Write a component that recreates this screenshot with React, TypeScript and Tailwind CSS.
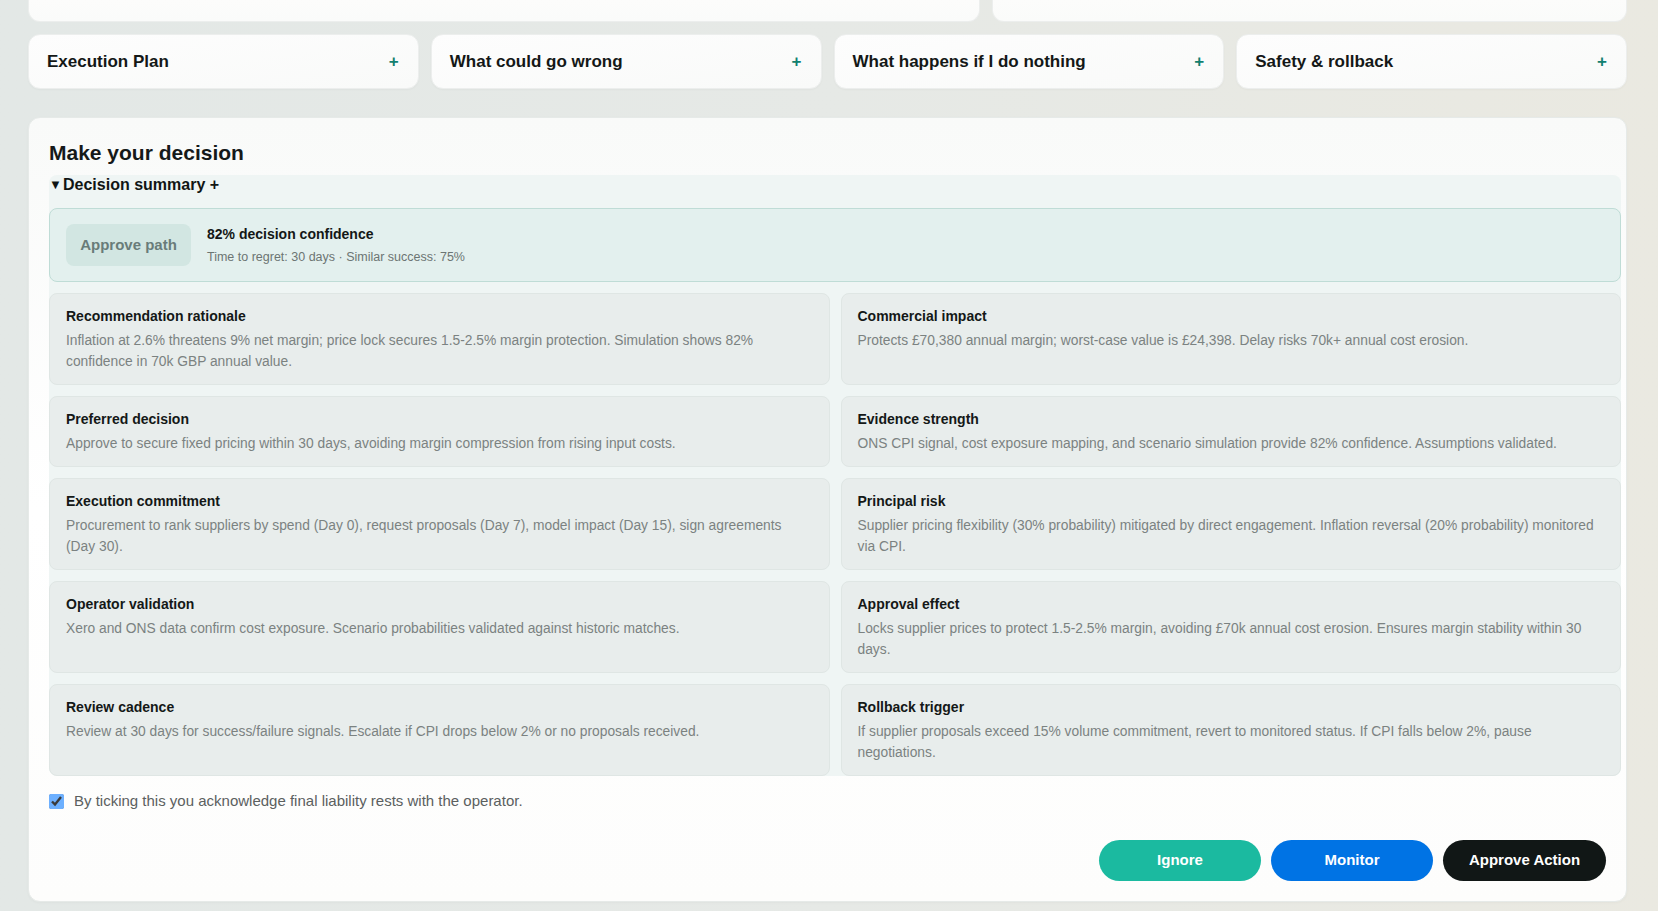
const SECTIONS = ['Execution Plan', 'What could go wrong', 'What happens if I do nothing', 'Safety & rollback']

const SUMMARY_CARDS: { title: string; body: string }[] = [
  {
    title: 'Recommendation rationale',
    body: 'Inflation at 2.6% threatens 9% net margin; price lock secures 1.5-2.5% margin protection. Simulation shows 82% confidence in 70k GBP annual value.',
  },
  {
    title: 'Commercial impact',
    body: 'Protects £70,380 annual margin; worst-case value is £24,398. Delay risks 70k+ annual cost erosion.',
  },
  {
    title: 'Preferred decision',
    body: 'Approve to secure fixed pricing within 30 days, avoiding margin compression from rising input costs.',
  },
  {
    title: 'Evidence strength',
    body: 'ONS CPI signal, cost exposure mapping, and scenario simulation provide 82% confidence. Assumptions validated.',
  },
  {
    title: 'Execution commitment',
    body: 'Procurement to rank suppliers by spend (Day 0), request proposals (Day 7), model impact (Day 15), sign agreements (Day 30).',
  },
  {
    title: 'Principal risk',
    body: 'Supplier pricing flexibility (30% probability) mitigated by direct engagement. Inflation reversal (20% probability) monitored via CPI.',
  },
  {
    title: 'Operator validation',
    body: 'Xero and ONS data confirm cost exposure. Scenario probabilities validated against historic matches.',
  },
  {
    title: 'Approval effect',
    body: 'Locks supplier prices to protect 1.5-2.5% margin, avoiding £70k annual cost erosion. Ensures margin stability within 30 days.',
  },
  {
    title: 'Review cadence',
    body: 'Review at 30 days for success/failure signals. Escalate if CPI drops below 2% or no proposals received.',
  },
  {
    title: 'Rollback trigger',
    body: 'If supplier proposals exceed 15% volume commitment, revert to monitored status. If CPI falls below 2%, pause negotiations.',
  },
]

export default function App() {
  return (
    <div className="min-h-screen w-full bg-gradient-to-r from-[#e3e8e6] via-[#e6e9e6] to-[#eae9e1] font-['Liberation_Sans',Arial,sans-serif] text-[#161a19]">
      <div className="ml-[28px] w-[1599px] pb-[11px]">
        {/* Tail of the cards above (scrolled out of view) */}
        <div className="grid grid-cols-[3fr_2fr] gap-3">
          <div className="h-[22px] rounded-b-xl border border-t-0 border-[#eceeed] bg-gradient-to-b from-[#fcfcfb] to-[#fafbfa]" />
          <div className="h-[22px] rounded-b-xl border border-t-0 border-[#eceeed] bg-gradient-to-b from-[#fcfcfb] to-[#fafbfa]" />
        </div>

        {/* Expandable sections */}
        <div className="mt-3 grid grid-cols-4 gap-3">
          {SECTIONS.map((label) => (
            <button
              key={label}
              className="flex h-[55px] items-center justify-between rounded-xl border border-[#eceeed] bg-gradient-to-br from-[#fdfdfd] to-[#f9faf9] pl-[18px] pr-[19px] text-left shadow-[0_1px_2px_rgba(0,0,0,0.03)]"
            >
              <span className="text-[17px] font-bold text-[#141817]">{label}</span>
              <span className="text-[17px] font-bold text-[#12806f]">+</span>
            </button>
          ))}
        </div>

        {/* Decision panel */}
        <section className="mt-7 rounded-xl border border-[#e6eae8] bg-gradient-to-b from-[#f9faf9] via-white to-[#fdfdfc] p-5 shadow-[0_1px_3px_rgba(0,0,0,0.03)]">
          <h2 className="mt-[2px] text-[21px] font-bold leading-[26px] text-[#151919]">Make your decision</h2>

          <details open className="mr-[-15px] mt-[9px] rounded-lg bg-[#eff5f4]">
            <summary className="flex h-[20px] cursor-pointer list-none items-center leading-[20px] text-[#111514]">
              <span className="w-[14px] text-[13px] leading-[20px]">▼</span>
              <span className="text-[16px] font-bold">Decision summary +</span>
            </summary>

            <div className="mt-[13px] flex items-center gap-4 rounded-lg border border-[#bfdcd6] bg-[#e3f0ee] px-4 py-[15px]">
              <div className="flex h-[42px] w-[125px] items-center justify-center rounded-lg bg-[#d2e6e2] text-[15px] font-bold text-[#697c79]">
                Approve path
              </div>
              <div className="flex flex-col">
                <span className="text-[14px] font-semibold leading-[20px] text-[#131716]">82% decision confidence</span>
                <span className="mt-1 text-[12.5px] leading-[18px] text-[#6c7573]">
                  Time to regret: 30 days · Similar success: 75%
                </span>
              </div>
            </div>

            <div className="mt-[11px] grid grid-cols-2 gap-[11px]">
              {SUMMARY_CARDS.map((card) => (
                <div key={card.title} className="rounded-lg border border-[#dfe6e4] bg-[#e8edec] px-4 py-3">
                  <div className="text-[14px] font-semibold leading-[21px] text-[#141817]">{card.title}</div>
                  <p className="mt-[3px] text-[13.8px] leading-[21px] text-[#7b8281]">{card.body}</p>
                </div>
              ))}
            </div>
          </details>

          <label className="mt-[14px] flex items-center gap-[10px] text-[15px] leading-[22px] text-[#5b605f]">
            <input type="checkbox" defaultChecked className="m-0 h-[15px] w-[15px] accent-[#6db0ff]" />
            By ticking this you acknowledge final liability rests with the operator.
          </label>

          <div className="mt-[28px] flex justify-end gap-[10px]">
            <button className="h-[41px] w-[162px] rounded-full bg-[#1bbaa0] text-[15px] font-bold text-white">Ignore</button>
            <button className="h-[41px] w-[162px] rounded-full bg-[#0073e4] text-[15px] font-bold text-white">Monitor</button>
            <button className="h-[41px] w-[163px] rounded-full bg-[#111716] text-[15px] font-bold text-white">
              Approve Action
            </button>
          </div>
        </section>
      </div>
    </div>
  )
}
